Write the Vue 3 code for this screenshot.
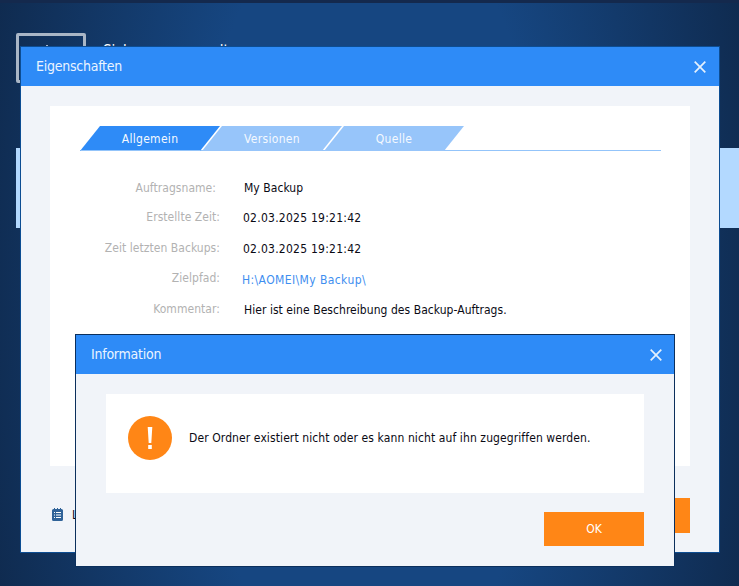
<template>
  <div class="desktop">
    <div class="top-line"></div>
    <div class="app-head">
      <div class="app-icon">
        <svg class="app-glyph" viewBox="0 0 14 3"><path d="M1 3V2h1V1h2v1h2v1zM9 2h4v1H9z" /></svg>
      </div>
      <span class="app-title">Sicherungsverwaltung</span>
    </div>
    <div class="band"></div>

    <section class="dialog props">
      <header class="bar">
        <span>Eigenschaften</span>
        <svg class="close" viewBox="0 0 12 12"><path d="M.7.7l10.6 10.6M11.3.7L.7 11.3" /></svg>
      </header>
      <div class="props-body">
        <div class="card">
          <div class="tabs">
            <div
              v-for="(tab, i) in tabs"
              :key="tab"
              class="tab"
              :class="{ active: i === 0 }"
            >
              {{ tab }}
            </div>
          </div>
          <dl class="rows">
            <div v-for="row in rows" :key="row.label" class="row" :class="row.type">
              <dt>{{ row.label }}</dt>
              <dd>{{ row.value }}</dd>
            </div>
          </dl>
        </div>
        <div class="props-foot">
          <svg class="log-icon" viewBox="0 0 11 13">
            <path fill="#2f6298" d="M1.500 1H2V0h1v1h2V0h1v1h2V0h1v1h.5A1.500 1.500 0 0 1 11 2.500v9A1.500 1.500 0 0 1 9.500 13h-8A1.500 1.500 0 0 1 0 11.500v-9A1.500 1.500 0 0 1 1.500 1z" />
            <path stroke="#fff" stroke-width="1" d="M2 4.500h1M4 4.500h5M2 7h1M4 7h5M2 9.500h1M4 9.500h5" />
          </svg>
          <span class="log-text">Log</span>
          <button class="orange foot-btn" type="button">OK</button>
        </div>
      </div>
    </section>

    <section class="dialog info">
      <header class="bar">
        <span>Information</span>
        <svg class="close" viewBox="0 0 12 12"><path d="M.7.7l10.6 10.6M11.3.7L.7 11.3" /></svg>
      </header>
      <div class="info-body">
        <div class="message">
          <svg class="alert" viewBox="0 0 44 44">
            <circle cx="22" cy="22" r="22" fill="#ff8616" />
            <path fill="#fff" d="M19.700 11h4.600l-1 16h-2.600zM20.200 29h3.600v4h-3.600z" />
          </svg>
          <p>Der Ordner existiert nicht oder es kann nicht auf ihn zugegriffen werden.</p>
        </div>
        <div class="info-foot">
          <button class="orange ok" type="button">OK</button>
        </div>
      </div>
    </section>
  </div>
</template>

<script setup>
const tabs = ['Allgemein', 'Versionen', 'Quelle']

const rows = [
  { label: 'Auftragsname:', value: 'My Backup', type: 'name' },
  { label: 'Erstellte Zeit:', value: '02.03.2025 19:21:42', type: 'date' },
  { label: 'Zeit letzten Backups:', value: '02.03.2025 19:21:42', type: 'date' },
  { label: 'Zielpfad:', value: 'H:\\AOMEI\\My Backup\\', type: 'link' },
  { label: 'Kommentar:', value: 'Hier ist eine Beschreibung des Backup-Auftrags.', type: 'text' },
]
</script>

<style>
html,
body {
  margin: 0;
  overflow: hidden;
}
</style>

<style scoped>
.desktop {
  position: relative;
  width: 739px;
  height: 586px;
  overflow: hidden;
  font-family: "DejaVu Sans Condensed", "DejaVu Sans", sans-serif;
  font-size: 12px;
  letter-spacing: 0.05px;
  background: radial-gradient(ellipse 400px 900px at 50% 50%, #164681 0%, #164681 45%, #0f2a4e 100%);
}

.top-line {
  height: 3px;
  background: #14294d;
}

.app-head {
  display: flex;
  align-items: flex-start;
  gap: 17px;
  padding: 30px 0 0 16px;
}

.app-icon {
  display: flex;
  justify-content: center;
  box-sizing: border-box;
  width: 70px;
  height: 50px;
  padding-top: 8px;
  border: 3px solid #a9b6c6;
  border-radius: 2px;
}

.app-glyph {
  width: 14px;
  height: 3px;
  fill: #a9b6c6;
}

.app-title {
  padding-top: 8px;
  color: #fff;
  font-size: 15px;
  line-height: 20px;
}

.band {
  height: 80px;
  margin: 65px 0 0 16px;
  background: #b3d9ff;
}

.dialog {
  position: absolute;
  display: flex;
  flex-direction: column;
  box-sizing: border-box;
  background: #f1f4f9;
}

.props {
  left: 20px;
  top: 46px;
  width: 700px;
  height: 507px;
  border: 1px solid #0d4d92;
}

.info {
  left: 75px;
  top: 334px;
  width: 600px;
  height: 233px;
  border: 1px solid #0b2f5c;
}

.bar {
  display: flex;
  align-items: center;
  justify-content: space-between;
  flex: none;
  box-sizing: border-box;
  height: 39px;
  padding: 0 12px 0 15px;
  background: #2e8bf7;
  color: #eaf4ff;
  font-size: 14px;
  letter-spacing: -0.25px;
}

.props .bar {
  padding-right: 13px;
}

.bar span {
  padding-bottom: 2px;
}

.close {
  width: 12px;
  height: 12px;
  fill: none;
  stroke: #e4f0fd;
  stroke-width: 1.700;
}

.props-body {
  display: flex;
  flex: 1;
  flex-direction: column;
  padding: 20px 29px 0;
}

.card {
  height: 360px;
  box-sizing: border-box;
  padding: 20px 29px 0 30px;
  background: #fff;
}

.tabs {
  display: flex;
  box-sizing: border-box;
  height: 25px;
  border-bottom: 1px solid #93c4fa;
}

.tab {
  display: flex;
  align-items: center;
  justify-content: center;
  box-sizing: border-box;
  flex: none;
  width: 140px;
  height: 25px;
  margin-right: -18px;
  background: #97c5fa;
  color: #f4f9ff;
  letter-spacing: 0.3px;
  clip-path: polygon(20px 0, 100% 0, 120px 100%, 0 100%);
}

.tab.active {
  background: #2e8bf7;
  box-shadow: inset 0 -1px 0 #93c4fa;
}

.rows {
  margin: 21.700px 0 0;
}

.row {
  display: grid;
  grid-template-columns: 140px 1fr;
  column-gap: 24px;
  height: 30.500px;
  align-items: center;
}

dt {
  margin-bottom: 2px;
  color: #b2b2b2;
  text-align: right;
}

dd {
  margin: 0;
  color: #0a0a14;
}

.name dt {
  margin-bottom: 0;
  padding-right: 4px;
}

.date dd {
  margin-left: -1px;
  letter-spacing: 0.25px;
}

.link dd {
  margin: 2px 0 0 -2px;
  color: #3e8ef0;
  letter-spacing: 0.4px;
}

.props-foot {
  display: flex;
  align-items: center;
  padding-top: 32px;
}

.log-icon {
  flex: none;
  width: 11px;
  height: 13px;
  margin: -2px 0 0 2px;
}

.log-text {
  margin: -2px 0 0 9px;
  color: #0a0a14;
}

.foot-btn {
  margin-left: auto;
}

.orange {
  width: 100px;
  height: 35px;
  padding: 0;
  border: none;
  background: #ff8616;
  color: #fff;
  font: inherit;
}

.info-body {
  display: flex;
  flex: 1;
  flex-direction: column;
  padding: 20px 30px 0;
}

.message {
  display: flex;
  align-items: flex-start;
  gap: 17px;
  height: 99px;
  box-sizing: border-box;
  padding: 22px 22px 0;
  background: #fff;
  letter-spacing: 0.1px;
}

.message p {
  margin: 0;
  padding-top: 15px;
  color: #0a0a14;
}

.alert {
  flex: none;
  width: 44px;
  height: 44px;
}

.info-foot {
  display: flex;
  justify-content: flex-end;
  padding-top: 19px;
}

.ok {
  height: 34px;
}
</style>
